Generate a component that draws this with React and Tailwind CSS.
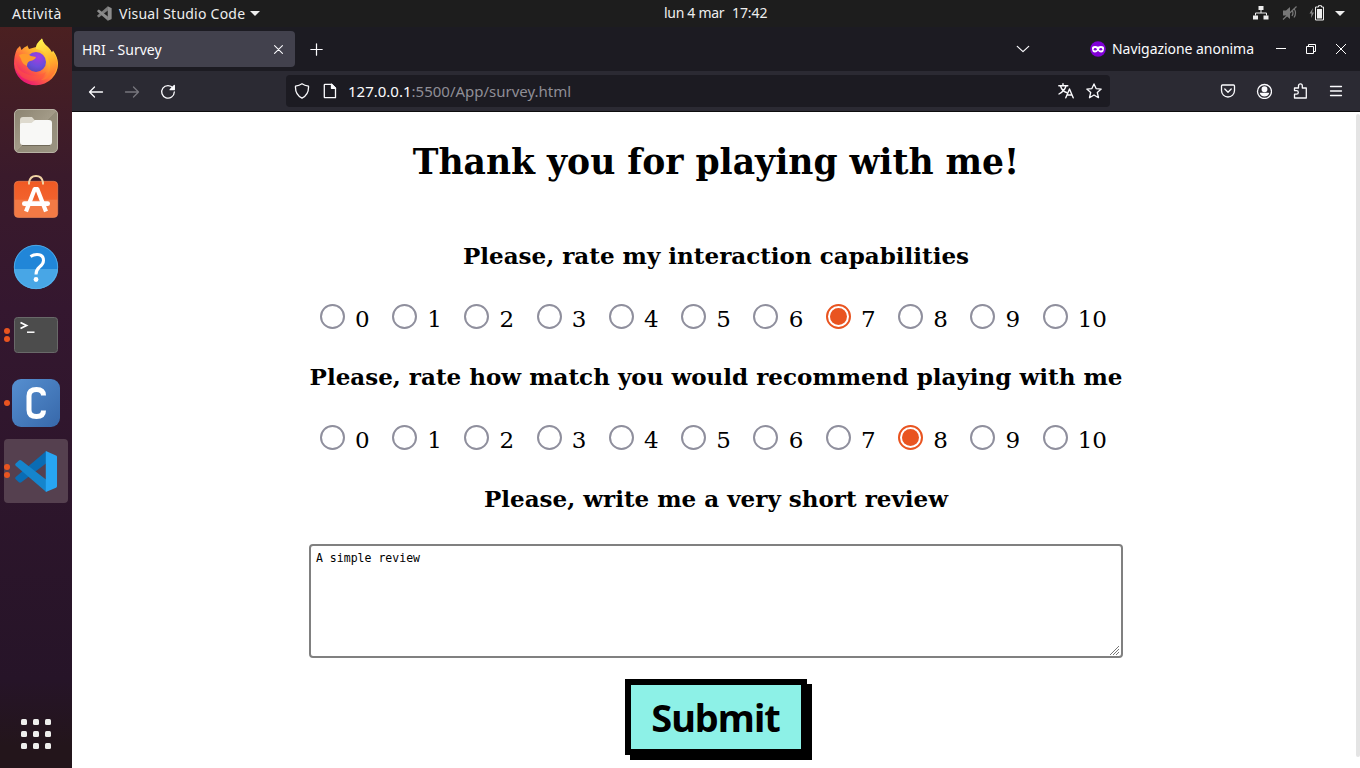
import React from "react";

const ui = "font-['Noto_Sans','Open_Sans',sans-serif]";
const scores = [0, 1, 2, 3, 4, 5, 6, 7, 8, 9, 10];

function CodeMark({ className, mono }) {
  return (
    <svg viewBox="0 0 44 44" className={className}>
      <path d="M32 1V13.500L6.500 33Q5 34 4 33L.7 30q-1-1.200 0-2.400z" fill={mono ? "#7c7c7c" : "#0a6cb3"} />
      <path d="M32 43V30.500L6.500 10.800Q5 9.800 4 10.800L.7 13.700q-1 1.200 0 2.400z" fill={mono ? "#8c8c8c" : "#1585cc"} />
      <path d="M31.500 1 42 5.500Q43 6 43 7v30q0 1-1 1.500L31.500 43z" fill={mono ? "#8c8c8c" : "#27a5f2"} />
    </svg>
  );
}

function Firefox() {
  return (
    <svg viewBox="0 0 48 48" className="-mt-[3px] size-12">
      <defs>
        <linearGradient id="fx" x1="0.85" y1="0.1" x2="0.2" y2="0.95">
          <stop offset="0" stopColor="#fff04a" />
          <stop offset="0.35" stopColor="#ffb52d" />
          <stop offset="0.65" stopColor="#ff6040" />
          <stop offset="1" stopColor="#e8107a" />
        </linearGradient>
        <linearGradient id="fxtail" x1="0.4" y1="0" x2="0.6" y2="1">
          <stop offset="0" stopColor="#fff34d" />
          <stop offset="0.55" stopColor="#ffb22b" />
          <stop offset="1" stopColor="#ff6a35" />
        </linearGradient>
        <radialGradient id="fxorb" cx="0.6" cy="0.25" r="0.8">
          <stop offset="0" stopColor="#a63be0" />
          <stop offset="0.6" stopColor="#6b4ddb" />
          <stop offset="1" stopColor="#5a45b8" />
        </radialGradient>
      </defs>
      <path d="M5 11 8 8l1.500 4Q12 9 15 8V7l2 4L24 9 30 .500q1 5 5 8 3 2 5 6l1-2q5 7 5 13A22 21.500 0 0 1 2 26q0-9 3-15z" fill="url(#fx)" />
      <path d="M24 11q-1-5 6-10.500Q31 5 36 9q3 3 4.500 7l.5-2q5 7 4.500 14Q42 41 29 42 44 34 34 17q-3-5-10-6z" fill="url(#fxtail)" />
      <circle cx="24" cy="24" r="10" fill="url(#fxorb)" />
      <path d="M7 17q7-3 12 1l5 1q-1 3-6 4-3 1-3 5-5-2-6-7z" fill="#ff9a2b" />
      <path d="M3 19q1 14 12 17 9 4 19-2-3 9-15 9Q8 41 3 30z" fill="#ff5a3c" opacity=".5" />
    </svg>
  );
}

function Files() {
  return (
    <svg viewBox="0 0 48 48" className="size-12">
      <defs>
        <linearGradient id="fl" x1="0" y1="0" x2="1" y2="1">
          <stop offset="0" stopColor="#8b8370" />
          <stop offset=".5" stopColor="#a39b88" />
          <stop offset=".51" stopColor="#938c79" />
          <stop offset="1" stopColor="#9b9482" />
        </linearGradient>
      </defs>
      <rect x="2.500" y="2.500" width="43" height="43" rx="4.500" fill="url(#fl)" stroke="#b8b2a4" />
      <path d="M8 13q0-3 3-3h9l3 3.500h13v8H8z" fill="#dedace" />
      <path d="M8 17.500q0-1.500 2-1.500h9.500l3.500-3h14q3 0 3 3v19q0 3-3 3H11q-3 0-3-3z" fill="#f8f8f6" />
      <path d="M10 38.500h28" stroke="#6f6959" />
    </svg>
  );
}

function Store() {
  return (
    <svg viewBox="0 0 48 48" className="size-12">
      <defs>
        <linearGradient id="st" x1="0" y1="0" x2="0" y2="1">
          <stop offset="0" stopColor="#f05a24" />
          <stop offset=".5" stopColor="#f2622d" />
          <stop offset=".51" stopColor="#f37a45" />
          <stop offset="1" stopColor="#f37a45" />
        </linearGradient>
      </defs>
      <rect x="2.300" y="6.300" width="43.400" height="36.200" rx="4" fill="url(#st)" stroke="#f58a58" strokeWidth=".6" />
      <path d="M17 9.500V7.500Q18 1 24 1t7 6.500v2" fill="none" stroke="#f0d3a4" strokeWidth="2" />
      <path d="m14 36.500 8.500-22h3l8.500 22M22 14h4" fill="none" stroke="#fff" strokeWidth="4.200" />
      <rect x="10" y="26.300" width="28" height="4.700" rx="2.300" fill="#fff" />
    </svg>
  );
}

function Help() {
  return (
    <svg viewBox="0 0 48 48" className="size-12">
      <circle cx="24" cy="24" r="22" fill="#2186d8" />
      <path d="M2 26a22 20 0 0 0 44 0z" fill="#48a6e6" />
      <circle cx="24" cy="24" r="21.700" fill="none" stroke="#58b4ee" strokeWidth=".8" />
      <path d="M18.500 13.500q3-2 6.500-2 6.500 0 6.500 6 0 3.500-4 6.500-3.500 3-3.500 7.500" fill="none" stroke="#fff" strokeWidth="3" />
      <circle cx="24" cy="36.500" r="2.400" fill="#fff" />
    </svg>
  );
}

function Terminal() {
  return (
    <svg viewBox="0 0 48 48" className="size-12">
      <rect x="2.500" y="6.500" width="43" height="35" rx="3" fill="#4c4c4c" stroke="#696969" />
      <path d="m8.500 11.500 6 3-6 3" fill="none" stroke="#fff" strokeWidth="1.800" />
      <path d="M15 21.200h7.500" stroke="#fff" strokeWidth="1.500" />
    </svg>
  );
}

function CApp() {
  return (
    <svg viewBox="0 0 48 48" className="size-12">
      <defs>
        <linearGradient id="ca" x1="0" y1="0" x2="1" y2="1">
          <stop offset="0" stopColor="#568fd0" />
          <stop offset="1" stopColor="#3768aa" />
        </linearGradient>
      </defs>
      <rect width="48" height="48" rx="9" fill="url(#ca)" />
      <path d="M31.500 16.500q0-6-7-6-7.500 0-7.500 6.500v14q0 6.500 7.500 6.500 7 0 7-6" fill="none" stroke="#fff" strokeWidth="5" />
    </svg>
  );
}

function DockItem({ dots = 0, active = false, children }) {
  return (
    <div className={`relative flex size-16 shrink-0 items-center justify-center rounded-[4px] ${active ? "bg-[#55404f]" : ""}`}>
      {children}
      <div className="absolute inset-y-0 left-0 flex flex-col items-center justify-center gap-[2.500px]">
        {Array.from({ length: dots }, (_, i) => (
          <span key={i} className="size-[6px] rounded-full bg-[#e95420]" />
        ))}
      </div>
    </div>
  );
}

function Icon({ children, className = "size-4", w = 1.3 }) {
  return (
    <svg viewBox="0 0 16 16" className={`shrink-0 ${className}`} fill="none" stroke="currentColor" strokeWidth={w} strokeLinecap="round" strokeLinejoin="round">
      {children}
    </svg>
  );
}

function TopBar() {
  return (
    <header className={`flex h-[27px] shrink-0 items-center bg-[#1d1d1d] text-[14px] text-[#eeeeee] ${ui}`}>
      <span className="w-[86px] pl-3 text-[14px] tracking-[0.45px]">Attività</span>
      <div className="flex w-[578px] items-center pl-[11px]">
        <CodeMark className="size-[15px]" mono />
        <span className="ml-[7px] w-[127px] whitespace-nowrap text-[14px] tracking-[0.24px]">Visual Studio Code</span>
        <svg viewBox="0 0 10 5" className="ml-[4px] h-[5px] w-[10px]"><path d="M0 0h10L5 5z" fill="#eee" /></svg>
      </div>
      <span className="-mt-0.5 w-[69px] whitespace-nowrap text-[14px] tracking-[-0.3px]">lun 4 mar</span>
      <span className="-ml-px -mt-0.5 text-[14px] tracking-[-0.1px]">17:42</span>
      <div className="ml-auto flex items-center pr-[15px]">
        <svg viewBox="0 0 16 14" className="-ml-px -mt-0.5 mr-px h-[14px] w-4">
          <path d="M5.500 0h5v4h-5zM0 9.500h5v4H0zM10.500 9.500h5v4h-5z" fill="#eee" />
          <path d="M8 4v3M2.500 9.500V7h11v2.500" fill="none" stroke="#eee" />
        </svg>
        <svg viewBox="0 0 16 14" className="-mt-px ml-3 h-[14px] w-4">
          <path d="M1 4.500h3L8 1v12L4 9.500H1z" fill="#777" />
          <path d="M10 4q2 3 0 6M12 2.500q3 4.500 0 9M1 13.500 14.500.5" fill="none" stroke="#777" strokeWidth="1.200" />
        </svg>
        <svg viewBox="0 0 16 16" className="-mt-0.5 ml-[11px] h-4 w-4">
          <path d="M4 3 .5 8.500h2L2 13l3-5.500H3z" fill="#888" />
          <path d="M6.500 2h3V.700h3V2h2v13h-8z" fill="none" stroke="#eee" />
          <path d="M8 4h5v9.500H8z" fill="#eee" />
        </svg>
        <svg viewBox="0 0 10 5" className="ml-[10px] h-[5px] w-[10px]"><path d="M0 0h10L5 5z" fill="#eee" /></svg>
      </div>
    </header>
  );
}

function TabBar() {
  return (
    <div className={`flex h-[44px] shrink-0 items-center bg-[#1c1b22] pl-[2px] text-[#fbfbfe] ${ui}`}>
      <div className="flex h-9 w-[221px] items-center justify-between rounded-[4px] bg-[#42414d] pl-2 pr-[12px]">
        <span className="text-[14px]">HRI - Survey</span>
        <Icon className="size-[9px]" w={1.9}><path d="M1 1 15 15M15 1 1 15" /></Icon>
      </div>
      <Icon className="ml-[15px] size-[13px]" w={1.5}><path d="M8 1v14M1 8h14" /></Icon>
      <div className="ml-auto flex items-center pr-[14px]">
        <Icon className="size-[14px]" w={1.4}><path d="m1.500 5 6.500 6 6.500-6" /></Icon>
        <svg viewBox="0 0 16 16" className="ml-[60px] size-4">
          <circle cx="8" cy="8" r="7.800" fill="#8000d7" />
          <path d="M2 7q0-2 3-2 2 0 3 .700Q9 5 11 5q3 0 3 2 0 4.500-3 4.500-2 0-3-1.700-1 1.700-3 1.700Q2 11.500 2 7z" fill="#fff" />
          <ellipse cx="5.200" cy="8.200" rx="1.500" ry="1.200" fill="#8000d7" />
          <ellipse cx="10.800" cy="8.200" rx="1.500" ry="1.200" fill="#8000d7" />
        </svg>
        <span className="-mt-0.5 ml-[6px] w-[142px] whitespace-nowrap text-[14px] tracking-[-0.04px]">Navigazione anonima</span>
        <svg viewBox="0 0 10 10" className="ml-[22px] size-[10px]"><path d="M0 4.500h10" stroke="#fff" /></svg>
        <svg viewBox="0 0 10 10" className="ml-5 size-[10px]"><path d="M.5 2.500h7v7h-7zM2.500 2.500v-2h7v7h-2" fill="none" stroke="#fff" /></svg>
        <svg viewBox="0 0 10 10" className="ml-5 size-[10px]"><path d="m0 0 10 10M10 0 0 10" fill="none" stroke="#fff" /></svg>
      </div>
    </div>
  );
}

function Toolbar() {
  return (
    <div className={`flex h-[41px] shrink-0 items-center border-b border-[#0c0c0d] bg-[#2b2a33] text-[#fbfbfe] ${ui}`}>
      <div className="flex w-[214px] items-center gap-5 pl-4 pt-px">
        <Icon><path d="M14.500 8h-13M6.500 3 1.500 8l5 5" /></Icon>
        <Icon className="size-4 text-[#77767e]"><path d="M1.500 8h13M9.500 3l5 5-5 5" /></Icon>
        <Icon><path d="M13 4A6.300 6.300 0 1 0 14.300 8" /><path d="M14.300 1.500v4.200h-4.200z" fill="currentColor" /></Icon>
      </div>
      <div className="flex h-8 w-[824px] items-center rounded-[4px] bg-[#1c1b22] px-2">
        <Icon><path d="M8 .8Q10.500 2.600 14.500 3.200q.5 8.500-6.500 12Q1 11.700 1.500 3.200 5.500 2.600 8 .8z" /></Icon>
        <Icon className="ml-3 size-4"><path d="M3 1.300h6.500l4 4v9.400H3q-.7 0-.7-.7V2q0-.7.7-.7z" /><path d="M9.500 1.300v4h4z" fill="currentColor" /></Icon>
        <span className="ml-[10px] whitespace-nowrap text-[15px] text-[#8f8e96]"><span className="text-[#fbfbfe]">127.0.0.1</span>:5500/App/survey.html</span>
        <Icon className="ml-auto size-4" w={1.4}><path d="M.8 2.800h9M5 .8v2M2.500 3Q4 8 8.500 9.500M8 3Q6.500 8 1 11M7.800 14.800 11.500 6l3.700 8.800M9 12h5" /></Icon>
        <Icon className="ml-3 size-4"><path d="m8 .900 2.100 4.700 5.100.5-3.900 3.400 1.200 5.200L8 12l-4.500 2.700 1.200-5.200L.8 6.100l5.100-.5z" /></Icon>
      </div>
      <div className="ml-auto flex items-center gap-5 pr-4">
        <Icon><path d="M2.500 2h11q1 0 1 1v4.500a6.500 6.500 0 0 1-13 0V3q0-1 1-1zM4.800 6 8 9.200 11.200 6" /></Icon>
        <Icon><circle cx="8.500" cy="8.500" r="7" /><circle cx="8.500" cy="6.300" r="2.300" fill="currentColor" /><path d="M4.500 10.300h8Q11.500 12.800 8.500 12.800t-4-2.500z" fill="currentColor" /></Icon>
        <Icon><path d="M6.500 5V2.700a1.900 1.900 0 0 1 3.800 0V5h4v10H2.500v-3.800h2a1.800 1.800 0 0 0 0-3.600h-2V5z" /></Icon>
        <Icon><path d="M2.500 3.500h11M2.500 8h11M2.500 12.500h11" /></Icon>
      </div>
    </div>
  );
}

function Rating({ value }) {
  return (
    <div className="flex h-[30px] w-[812px] pl-[9.850px] text-[23.040px]">
      {scores.map((n) => (
        <label key={n} className="flex w-[72.270px] shrink-0 items-start">
          <span className={`mt-px flex size-[25px] shrink-0 items-center justify-center rounded-full border-2 ${n === value ? "border-[#e95420]" : "border-[#8f8f9d]"}`}>
            {n === value && <span className="size-[17px] rounded-full bg-[#e95420]" />}
          </span>
          <span className="ml-[10.200px] leading-[32px]">{n}</span>
        </label>
      ))}
    </div>
  );
}

function Survey() {
  return (
    <main className="relative flex min-h-0 flex-1 flex-col items-center bg-white font-['DejaVu_Serif',serif] text-black">
      <h1 className="mt-[28px] h-[44px] whitespace-nowrap text-[34.560px] font-bold leading-[44px]">Thank you for playing with me!</h1>
      <h3 className="mt-[57px] h-[30px] whitespace-nowrap text-[23.040px] font-bold leading-[30px]">Please, rate my interaction capabilities</h3>
      <div className="mt-[32px]"><Rating value={7} /></div>
      <h3 className="mt-[29px] h-[30px] whitespace-nowrap text-[23.040px] font-bold leading-[30px]">Please, rate how match you would recommend playing with me</h3>
      <div className="mt-[32px]"><Rating value={8} /></div>
      <h3 className="mt-[30px] h-[30px] whitespace-nowrap text-[23.040px] font-bold leading-[30px]">Please, write me a very short review</h3>
      <div className="mt-[30px] flex h-[114px] w-[814px] shrink-0 items-start rounded-[4px] border-2 border-[#808080] px-[5px] pt-[5px] font-['DejaVu_Sans_Mono',monospace] text-[11.520px] leading-[14px]">
        <span>A simple review</span>
        <svg viewBox="0 0 11 11" className="-mr-[4px] ml-auto size-[11px] self-end"><path d="M1 10 10 1M4 10l6-6M7 10l3-3" stroke="#777" /></svg>
      </div>
      <button className="mr-px mt-[21px] flex h-[76px] w-[182px] shrink-0 items-center justify-center border-[6px] border-black bg-[#8df1e7] pb-0 font-['Noto_Sans','Open_Sans',sans-serif] text-[38px] font-bold leading-[52px] tracking-[-1px] shadow-[5px_5px_0_#000]">Submit</button>
      <div className="absolute right-0 top-[2px] h-[643px] w-[4px] rounded-full bg-[#e4e4e4]" />
    </main>
  );
}

export default function App() {
  return (
    <div className="flex h-screen w-screen flex-col overflow-hidden">
      <TopBar />
      <div className="flex min-h-0 flex-1">
        <aside className="flex w-[72px] shrink-0 flex-col items-center gap-1 bg-[linear-gradient(#4b2021_0%,#3a1a2b_20%,#34172f_38%,#261428_88%,#23151b_97%)] pt-1">
          <DockItem><Firefox /></DockItem>
          <DockItem><Files /></DockItem>
          <DockItem><Store /></DockItem>
          <DockItem><Help /></DockItem>
          <DockItem dots={2}><Terminal /></DockItem>
          <DockItem dots={1}><CApp /></DockItem>
          <DockItem dots={2} active><CodeMark className="size-[43px]" /></DockItem>
          <div className="mb-[19px] mt-auto grid grid-cols-3 gap-[6px]">
            {Array.from({ length: 9 }, (_, i) => (
              <span key={i} className="size-[6px] rounded-[1.500px] bg-[#eeeeec]" />
            ))}
          </div>
        </aside>
        <div className="flex min-w-0 flex-1 flex-col">
          <TabBar />
          <Toolbar />
          <Survey />
        </div>
      </div>
    </div>
  );
}
